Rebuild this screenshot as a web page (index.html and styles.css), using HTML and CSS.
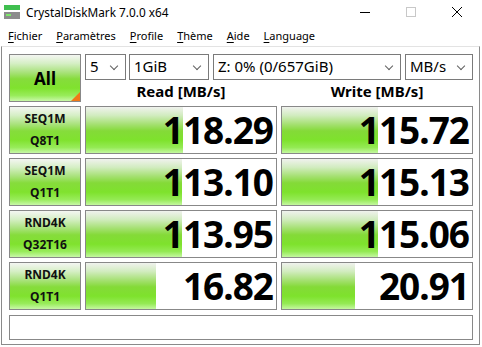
FILE: index.html
```html
<!DOCTYPE html>
<html lang="fr">
<head>
  <meta charset="UTF-8" />
  <title>CrystalDiskMark 7.0.0 x64</title>
  <link rel="stylesheet" href="styles.css">
</head>
<body>
  <div class="titlebar">
    <svg class="app-icon" width="16" height="16" viewBox="0 0 16 16">
      <rect x="0" y="1" width="16" height="5" fill="#3fbf4f"/>
      <rect x="0" y="8" width="16" height="7" fill="#8c8c8c"/>
      <rect x="2" y="10" width="5" height="2" fill="#7de86a"/>
    </svg>
    <span class="title">CrystalDiskMark 7.0.0 x64</span>
    <div class="winbtns">
      <span class="winbtn">
        <svg width="10" height="10" viewBox="0 0 10 10"><line x1="0" y1="5.5" x2="10" y2="5.5" stroke="#000" stroke-width="1"/></svg>
      </span>
      <span class="winbtn">
        <svg width="10" height="10" viewBox="0 0 10 10"><rect x="0.5" y="0.5" width="9" height="9" fill="none" stroke="#c8c8c8" stroke-width="1"/></svg>
      </span>
      <span class="winbtn">
        <svg width="10" height="10" viewBox="0 0 10 10"><path d="M0 0 L10 10 M10 0 L0 10" stroke="#000" stroke-width="1"/></svg>
      </span>
    </div>
  </div>

  <div class="menubar">
    <span class="menu"><u>F</u>ichier</span>
    <span class="menu"><u>P</u>aramètres</span>
    <span class="menu"><u>P</u>rofile</span>
    <span class="menu"><u>T</u>hème</span>
    <span class="menu"><u>A</u>ide</span>
    <span class="menu"><u>L</u>anguage</span>
  </div>

  <div class="panel">
    <div class="grid">
      <div class="btn all">All<span class="corner"></span></div>
      <div class="topright">
        <div class="combos">
          <div class="combo c-count">5<span class="chev"></span></div>
          <div class="combo c-size">1GiB<span class="chev"></span></div>
          <div class="combo c-drive">Z: 0% (0/657GiB)<span class="chev"></span></div>
          <div class="combo c-unit">MB/s<span class="chev"></span></div>
        </div>
        <div class="heads">
          <div class="head">Read [MB/s]</div>
          <div class="head">Write [MB/s]</div>
        </div>
      </div>

      <div class="btn label">SEQ1M<br>Q8T1</div>
      <div class="result"><div class="bar" style="width:97px"></div><span class="num">118.29</span></div>
      <div class="result"><div class="bar" style="width:96px"></div><span class="num">115.72</span></div>

      <div class="btn label">SEQ1M<br>Q1T1</div>
      <div class="result"><div class="bar" style="width:96px"></div><span class="num">113.10</span></div>
      <div class="result"><div class="bar" style="width:96px"></div><span class="num">115.13</span></div>

      <div class="btn label">RND4K<br>Q32T16</div>
      <div class="result"><div class="bar" style="width:96px"></div><span class="num">113.95</span></div>
      <div class="result"><div class="bar" style="width:96px"></div><span class="num">115.06</span></div>

      <div class="btn label">RND4K<br>Q1T1</div>
      <div class="result"><div class="bar" style="width:70px"></div><span class="num">16.82</span></div>
      <div class="result"><div class="bar" style="width:73px"></div><span class="num">20.91</span></div>

      <div class="comment"></div>
    </div>
  </div>
</body>
</html>
```

FILE: styles.css
```css
html, body { margin: 0; padding: 0; }
body {
  width: 482px; height: 347px; overflow: hidden; background: #fff;
  font-family: "Noto Sans", "Open Sans", sans-serif; color: #000;
}

.titlebar { height: 24px; display: flex; align-items: center; position: relative; }
.app-icon { margin: 0 6px 0 4px; }
.title { font-size: 11.8px; }
.winbtns { margin-left: auto; display: flex; margin-right: 2px; }
.winbtn { width: 46px; height: 24px; display: flex; align-items: center; justify-content: center; }

.menubar { height: 22px; display: flex; align-items: center; font-size: 11px; padding-left: 8px; gap: 14px; }
.menu u { text-underline-offset: 2px; }

.panel {
  margin-left: 1px; width: 479px; height: 299px;
  border: 1px solid #8a8a8a; border-top-color: #e3e3e3;
  padding: 7px 8px 0 7px; box-sizing: border-box;
}
.grid { display: grid; grid-template-columns: 72px 192px 192px; gap: 4px; }

.btn {
  height: 48px; box-sizing: border-box; border: 1px solid #888;
  background: linear-gradient(to bottom, #f4f6f2 0%, #d6efc6 18%, #a8e27a 38%, #86dc3c 52%, #80e22e 72%, #98ec5a 88%, #c8f8a8 100%);
  display: flex; align-items: center; justify-content: center; text-align: center;
  font-weight: 700;
}
.all { position: relative; font-size: 17px; }
.corner {
  position: absolute; right: 0; bottom: 0; width: 0; height: 0;
  border-left: 9px solid transparent; border-bottom: 9px solid #f07818;
}
.label { font-size: 12px; line-height: 22px; color: #111; }

.topright { grid-column: 2 / 4; display: flex; flex-direction: column; }
.combos { display: flex; height: 26px; }
.combo {
  box-sizing: border-box; height: 26px; border: 1px solid #7a7a7a; background: #fff;
  font-size: 15px; line-height: 23px; padding-left: 4px; position: relative;
}
.c-count { width: 41px; margin-right: 3px; }
.c-size { width: 80px; margin-right: 4px; }
.c-drive { width: 188px; margin-right: 4px; }
.c-unit { width: 68px; }
.chev {
  position: absolute; right: 8px; top: 8px; width: 5px; height: 5px;
  border-right: 1px solid #606060; border-bottom: 1px solid #606060; transform: rotate(45deg);
}
.heads { display: grid; grid-template-columns: 192px 192px; gap: 4px; flex: 1; }
.head { text-align: center; font-weight: 700; font-size: 15px; line-height: 22px; }

.result {
  height: 48px; box-sizing: border-box; border: 1px solid #888; background: #fff;
  position: relative; display: flex; align-items: center; justify-content: flex-end;
}
.bar {
  position: absolute; left: 0; top: 0; bottom: 0;
  background: linear-gradient(to bottom, #f0f2ee 0%, #d2ecc0 18%, #a4e070 38%, #84da38 52%, #7ee22c 72%, #94ea54 88%, #c4f8a0 100%);
}
.num {
  position: relative; font-weight: 700; font-size: 37px; line-height: 46px;
  padding-right: 3px; letter-spacing: -1px;
}
.comment {
  grid-column: 1 / 4; height: 25px; box-sizing: border-box; border: 1px solid #888; background: #fff;
  margin-top: 1px;
}
```
